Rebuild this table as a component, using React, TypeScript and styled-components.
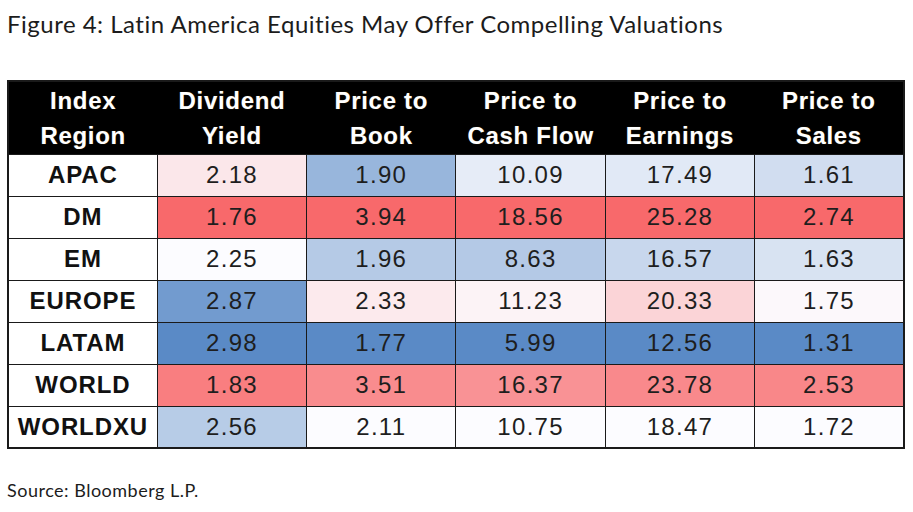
import React from 'react'
import styled, { createGlobalStyle } from 'styled-components'

const GlobalStyle = createGlobalStyle`
  html, body {
    margin: 0;
    padding: 0;
    background: #ffffff;
  }
`

const Page = styled.div`
  width: 913px;
  height: 512px;
  padding: 0 8px 0 7px;
  box-sizing: border-box;
  display: flex;
  flex-direction: column;
  background: #ffffff;
  color: #1a1a1a;
`

const Title = styled.div`
  font-family: Lato, 'Open Sans', sans-serif;
  font-size: 24px;
  line-height: 28px;
  margin-top: 10px;
  letter-spacing: 0.5px;
  color: #1c1c1c;
`

const TableStyle = styled.table`
  margin-top: 42px;
  width: 898px;
  border-collapse: collapse;
  table-layout: fixed;
  border: 2px solid #1a1a1a;
  font-family: 'Liberation Sans', Arial, sans-serif;
`

const HeadRow = styled.tr`
  height: 73px;
  background: #000000;
`

const Th = styled.th`
  color: #ffffff;
  font-size: 24px;
  font-weight: 700;
  line-height: 35px;
  letter-spacing: 0.7px;
  text-align: center;
  padding: 0;
  text-shadow: 0 0 1px #5a4a20;
`

const BodyRow = styled.tr`
  height: 42px;
`

const RegionCell = styled.td`
  background: #ffffff;
  border: 1.5px solid #1a1a1a;
  font-size: 24px;
  font-weight: 700;
  letter-spacing: 0.9px;
  text-align: center;
  padding: 0;
  color: #111111;
`

const ValueCell = styled.td<{ $bg: string }>`
  background: ${({ $bg }) => $bg};
  border: 1.5px solid #1a1a1a;
  font-size: 24px;
  letter-spacing: 1.3px;
  text-align: center;
  padding: 0;
  color: #1e1e1e;
`

const Source = styled.div`
  margin-top: 30px;
  font-family: Lato, 'Open Sans', sans-serif;
  font-size: 18px;
  letter-spacing: 0.5px;
  color: #1c1c1c;
`

type Row = { region: string; values: number[] }

const columns = [
  ['Index', 'Region'],
  ['Dividend', 'Yield'],
  ['Price to', 'Book'],
  ['Price to', 'Cash Flow'],
  ['Price to', 'Earnings'],
  ['Price to', 'Sales'],
]

const rows: Row[] = [
  { region: 'APAC', values: [2.18, 1.9, 10.09, 17.49, 1.61] },
  { region: 'DM', values: [1.76, 3.94, 18.56, 25.28, 2.74] },
  { region: 'EM', values: [2.25, 1.96, 8.63, 16.57, 1.63] },
  { region: 'EUROPE', values: [2.87, 2.33, 11.23, 20.33, 1.75] },
  { region: 'LATAM', values: [2.98, 1.77, 5.99, 12.56, 1.31] },
  { region: 'WORLD', values: [1.83, 3.51, 16.37, 23.78, 2.53] },
  { region: 'WORLDXU', values: [2.56, 2.11, 10.75, 18.47, 1.72] },
]

// excel style 3 colour scale: red / white / blue
const RED = [248, 105, 107]
const WHITE = [252, 252, 255]
const BLUE = [90, 138, 198]

const mix = (a: number[], b: number[], t: number) =>
  `rgb(${a.map((v, i) => Math.round(v + (b[i] - v) * t)).join(',')})`

// dividend yield: high is good (blue); price ratios: low is good (blue)
const scaleColour = (col: number, value: number) => {
  const list = rows.map((r) => r.values[col]).sort((a, b) => a - b)
  const min = list[0]
  const max = list[list.length - 1]
  const mid = list[Math.floor(list.length / 2)]
  const lowColour = col === 0 ? RED : BLUE
  const highColour = col === 0 ? BLUE : RED
  if (value <= mid) return mix(WHITE, lowColour, (mid - value) / (mid - min))
  return mix(WHITE, highColour, (value - mid) / (max - mid))
}

export default function App() {
  return (
    <Page>
      <GlobalStyle />
      <Title>Figure 4: Latin America Equities May Offer Compelling Valuations</Title>
      <TableStyle>
        <thead>
          <HeadRow>
            {columns.map(([a, b]) => (
              <Th key={a + b}>
                {a}
                <br />
                {b}
              </Th>
            ))}
          </HeadRow>
        </thead>
        <tbody>
          {rows.map((r) => (
            <BodyRow key={r.region}>
              <RegionCell>{r.region}</RegionCell>
              {r.values.map((v, i) => (
                <ValueCell key={i} $bg={scaleColour(i, v)}>
                  {v.toFixed(2)}
                </ValueCell>
              ))}
            </BodyRow>
          ))}
        </tbody>
      </TableStyle>
      <Source>Source: Bloomberg L.P.</Source>
    </Page>
  )
}
